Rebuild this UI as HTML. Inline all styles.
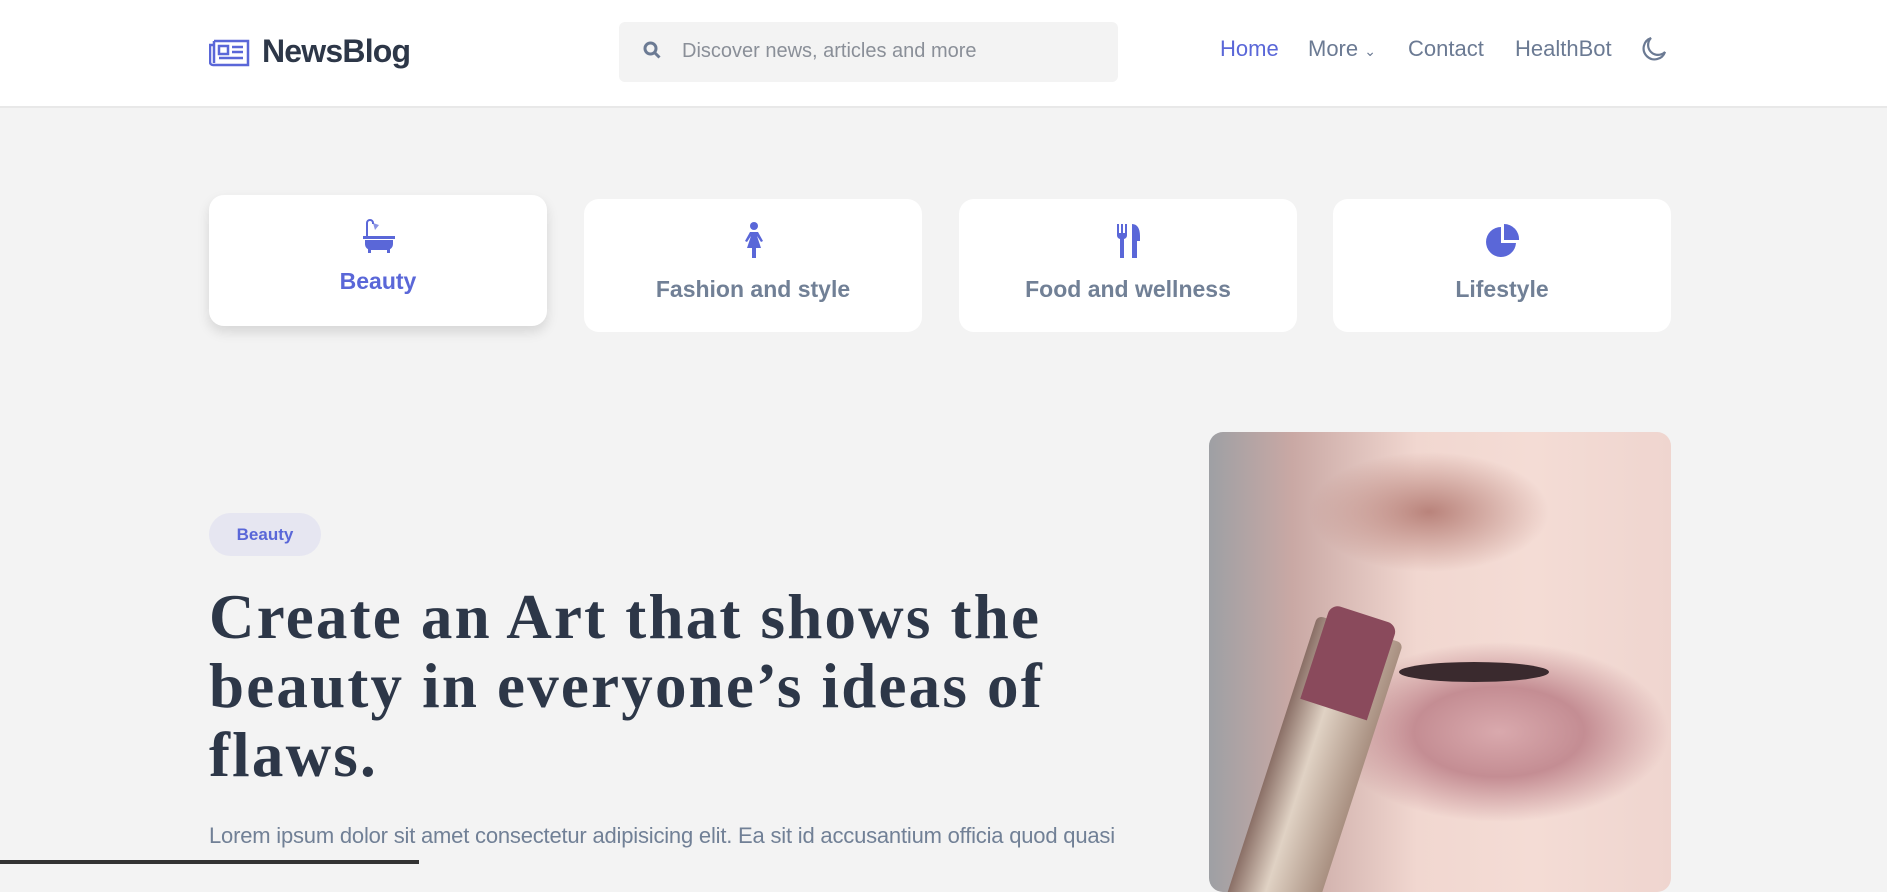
<!DOCTYPE html>
<html><head><meta charset="utf-8"><style>
*{margin:0;padding:0;box-sizing:border-box}
body{width:1887px;height:864px;overflow:hidden;background:#f3f3f3;font-family:"Liberation Sans",sans-serif;position:relative}
.hdr{position:absolute;left:0;top:0;width:1887px;height:108px;background:#fff;border-bottom:2px solid #e8e8e8}
.logo{position:absolute;left:209px;top:33px;display:flex;align-items:center}
.logo span{font-size:32px;font-weight:bold;color:#2d3748;margin-left:12px;letter-spacing:-0.8px}
.search{position:absolute;left:619px;top:22px;width:499px;height:60px;background:#f3f3f3;border-radius:6px}
.search svg{position:absolute;left:24px;top:19px}
.search span{position:absolute;left:63px;top:18px;font-size:20px;color:#8a8f98}
.nav{position:absolute;top:36px;font-size:22px;color:#6b7a93}
.card{position:absolute;width:338px;height:133px;background:#fff;border-radius:15px;text-align:center}
.card .lbl{position:absolute;left:0;right:0;top:77px;font-size:23px;font-weight:bold;color:#718096}
.card svg{position:absolute;left:153px;top:22px}
.badge{position:absolute;left:209px;top:513px;width:112px;height:43px;border-radius:22px;background:#e6e6f1;color:#5a67d8;font-size:17px;font-weight:bold;text-align:center;line-height:43px}
h1{position:absolute;left:209px;top:583px;font-family:"Liberation Serif",serif;font-size:63px;line-height:69px;color:#2d3748;font-weight:bold;letter-spacing:2.2px;width:960px}
.p{position:absolute;left:209px;top:823px;font-size:22px;color:#718096;white-space:nowrap;letter-spacing:-0.2px}
.img{position:absolute;left:1209px;top:432px;width:462px;height:460px;border-radius:14px;overflow:hidden;
background:radial-gradient(ellipse 120px 60px at 220px 80px,#b9837b 0%,rgba(185,131,123,0) 100%),radial-gradient(ellipse 170px 90px at 290px 300px,#d9a9ad 0%,#c48d93 50%,rgba(200,150,150,0) 100%),linear-gradient(90deg,#9ea0a4 0%,#c9a8a4 18%,#f1d7d0 45%,#f4dcd5 70%,#efd5cf 100%)}
.bar{position:absolute;left:0;top:860px;width:419px;height:4px;background:#333}
</style></head><body>
<div class="hdr">
 <div class="logo"><svg width="41" height="30" viewBox="0 0 41 30" fill="none" stroke="#5a67d8" stroke-width="2.5"><path d="M5 4h34v24H4a3 3 0 0 1-3-3V8h4"/><path d="M5 4v22"/><rect x="10" y="9" width="9" height="8"/><path d="M23 10h11M23 15h11M10 21h24"/></svg><span>NewsBlog</span></div>
 <div class="search"><svg width="18" height="18" viewBox="0 0 18 18" fill="none" stroke="#6b7a93" stroke-width="3"><circle cx="7.5" cy="7.5" r="5.5"/><path d="M11.5 11.5l5 5"/></svg><span>Discover news, articles and more</span></div>
 <div class="nav" style="left:1220px;color:#5a67d8">Home</div>
 <div class="nav" style="left:1308px">More <span style="font-size:14px">&#8964;</span></div>
 <div class="nav" style="left:1408px">Contact</div>
 <div class="nav" style="left:1515px">HealthBot</div>
 <svg style="position:absolute;left:1641px;top:36px" width="26" height="26" viewBox="0 0 26 26" fill="none" stroke="#6b7a93" stroke-width="2.2"><path d="M10 2a11 11 0 1 0 14 14A9 9 0 0 1 10 2z"/></svg>
</div>
<div class="card" style="left:209px;top:195px;height:131px;box-shadow:0 6px 12px rgba(0,0,0,0.12)">
 <svg width="34" height="36" viewBox="0 0 34 36" fill="#5a67d8"><path d="M4 20V6a4 4 0 0 1 8 0v1h-2V6a2 2 0 0 0-4 0v14z"/><path d="M11 6l6 2-4 5z" opacity=".7"/><rect x="1" y="19" width="32" height="3"/><path d="M3 23h28v4a6 6 0 0 1-6 6H9a6 6 0 0 1-6-6z"/><rect x="6" y="32" width="3" height="4"/><rect x="25" y="32" width="3" height="4"/></svg>
 <div class="lbl" style="top:73px;color:#5a67d8">Beauty</div></div>
<div class="card" style="left:584px;top:199px">
 <svg width="34" height="40" viewBox="0 0 34 40" fill="#5a67d8"><circle cx="17" cy="5" r="4"/><path d="M13 11h8l5 9-2 1-4-6 4 12h-5v10h-4V27H10l4-12-4 6-2-1z"/></svg>
 <div class="lbl">Fashion and style</div></div>
<div class="card" style="left:959px;top:199px">
 <svg width="34" height="40" viewBox="0 0 34 40" fill="#5a67d8"><path d="M5 3h2v9h2V3h2v9h2V3h2v11a4 4 0 0 1-3 4v19H8V18a4 4 0 0 1-3-4z"/><path d="M20 3c5 0 8 4 8 12v5h-3v17h-5z"/></svg>
 <div class="lbl">Food and wellness</div></div>
<div class="card" style="left:1333px;top:199px">
 <svg width="34" height="40" viewBox="0 0 34 40" fill="#5a67d8"><path d="M15 6a15 15 0 1 0 15 16H15z"/><path d="M18 3v16h15A15 15 0 0 0 18 3z"/></svg>
 <div class="lbl">Lifestyle</div></div>
<div class="badge">Beauty</div>
<h1>Create an Art that shows the beauty in everyone’s ideas of flaws.</h1>
<div class="p">Lorem ipsum dolor sit amet consectetur adipisicing elit. Ea sit id accusantium officia quod quasi</div>
<div class="img">
 <div style="position:absolute;left:60px;top:190px;width:90px;height:300px;background:linear-gradient(90deg,#8a6f66,#e0d2c4 40%,#a88f80);transform:rotate(18deg);border-radius:6px"></div>
 <div style="position:absolute;left:105px;top:180px;width:70px;height:100px;background:#8a4a5c;transform:rotate(18deg);border-radius:10px 10px 0 0"></div>
 <div style="position:absolute;left:190px;top:230px;width:150px;height:20px;background:#3a2a2e;border-radius:50%"></div>
</div>
<div class="bar"></div>
</body></html>
